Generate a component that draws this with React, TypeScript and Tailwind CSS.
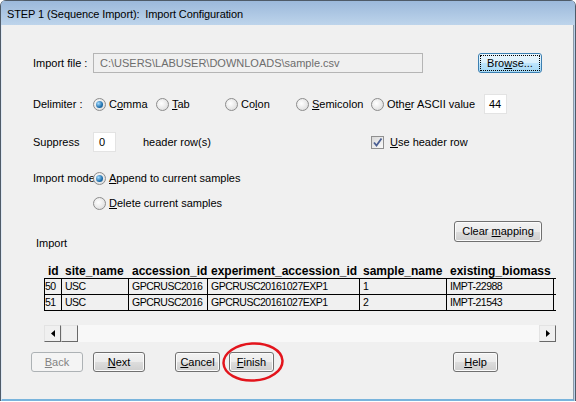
import React from 'react';
import clsx from 'clsx';

function Btn({ children, className, disabled, focused }: { children: React.ReactNode; className?: string; disabled?: boolean; focused?: boolean }) {
  return (
    <div
      className={clsx(
        'h-[20px] rounded-[3px] border flex items-center justify-center text-[11px] leading-none',
        disabled
          ? 'border-[#adb2b5] bg-[#f4f4f4] text-[#838383]'
          : focused
          ? 'border-[#3c7fb1] bg-[linear-gradient(#eaf6fd_0%,#d9f0fc_50%,#bee6fd_50%,#a7d9f5_100%)] outline outline-1 outline-dotted outline-black outline-offset-[-3px]'
          : 'border-[#707070] bg-[linear-gradient(#f2f2f2_0%,#ebebeb_50%,#dddddd_50%,#cfcfcf_100%)] shadow-[inset_0_0_0_1px_#fbfbfb]',
        className
      )}
    >
      {children}
    </div>
  );
}

function Radio({ checked }: { checked?: boolean }) {
  return (
    <span className="w-[13px] h-[13px] shrink-0 rounded-full border border-[#8c8c8c] bg-[radial-gradient(circle_at_40%_40%,#ffffff,#d6d6d6)] flex items-center justify-center">
      {checked && <span className="w-[7px] h-[7px] rounded-full bg-[radial-gradient(circle_at_35%_35%,#a6dcff,#1f70ad_60%,#0d4a80)]" />}
    </span>
  );
}

function ScrollBtn({ dir }: { dir?: 'left' | 'right' }) {
  return (
    <div className="w-[17px] h-[17px] shrink-0 border border-t-[#e3e3e3] border-l-[#e3e3e3] border-r-[#696969] border-b-[#696969] bg-[#f0f0f0] flex items-center justify-center">
      {dir === 'left' && (
        <svg width="4" height="7" viewBox="0 0 4 7"><polygon points="4,0 4,7 0,3.5" fill="#000" /></svg>
      )}
      {dir === 'right' && (
        <svg width="4" height="7" viewBox="0 0 4 7"><polygon points="0,0 0,7 4,3.5" fill="#000" /></svg>
      )}
    </div>
  );
}

const cols = [18, 67, 79, 152, 87, 107, 60];
const headers = ['id', 'site_name', 'accession_id', 'experiment_accession_id', 'sample_name', 'existing_biomass', ''];
const rows = [
  ['50', 'USC', 'GPCRUSC2016', 'GPCRUSC20161027EXP1', '1', 'IMPT-22988', ''],
  ['51', 'USC', 'GPCRUSC2016', 'GPCRUSC20161027EXP1', '2', 'IMPT-21543', ''],
];

export default function App() {
  return (
    <div className="w-[576px] h-[402px] bg-white font-['Liberation_Sans',Arial,sans-serif] text-black">
      <div className="h-[401px] flex flex-col border-l border-r border-[#4f5b68] rounded-t-[6px] overflow-hidden bg-[#b9d1ea]">
        {/* title bar */}
        <div className="h-[25px] shrink-0 border-t border-[#4f5b68] bg-[linear-gradient(#9cb9db,#bdd4eb)] pl-[6px] pt-[5px] text-[11px] tracking-[-0.1px] leading-[16px] whitespace-pre">
          STEP 1 (Sequence Import):  Import Configuration
        </div>

        <div className="flex-1 bg-[#f0f0f0] border-l border-[#dfe9f5] border-r border-r-[#8d9aa8] border-b-2 border-b-[#79b4dc] mr-[1px] text-[11px]">
          <div className="pl-[31px] w-[540px] flex flex-col">
            {/* import file */}
            <div className="mt-[28px] flex h-[20px] items-center">
              <span className="w-[60px]">Import file :</span>
              <div className="w-[330px] h-[20px] border border-[#b5b5b5] bg-[#f0f0f0] text-[#6d6d6d] pl-[6px] leading-[18px]">
                {'C:\\USERS\\LABUSER\\DOWNLOADS\\sample.csv'}
              </div>
              <Btn focused className="ml-[55px] w-[64px]">
                <span>Bro<u>w</u>se...</span>
              </Btn>
            </div>

            {/* delimiter */}
            <div className="mt-[21px] flex h-[20px] items-center">
              <span className="w-[60px]">Delimiter :</span>
              <span className="w-[63px] flex items-center gap-[3px]"><Radio checked /><span>C<u>o</u>mma</span></span>
              <span className="w-[69px] flex items-center gap-[3px]"><Radio /><span><u>T</u>ab</span></span>
              <span className="w-[71px] flex items-center gap-[3px]"><Radio /><span>Co<u>l</u>on</span></span>
              <span className="w-[75px] flex items-center gap-[3px]"><Radio /><span><u>S</u>emicolon</span></span>
              <span className="w-[113px] flex items-center gap-[3px]"><Radio /><span>Oth<u>e</u>r ASCII value</span></span>
              <div className="w-[23px] h-[20px] border border-[#e3e3e3] bg-white pl-[4px] leading-[18px]">44</div>
            </div>

            {/* suppress */}
            <div className="mt-[18px] flex h-[20px] items-center">
              <span className="w-[60px]">Suppress</span>
              <div className="w-[23px] h-[20px] border border-[#e3e3e3] bg-white pl-[5px] leading-[18px]">0</div>
              <span className="ml-[27px] w-[228px]">header row(s)</span>
              <span className="w-[13px] h-[13px] border border-[#8f8f8f] bg-[linear-gradient(135deg,#d8d8d8,#fbfbfb)] flex items-center justify-center">
                <svg width="11" height="11" viewBox="0 0 11 11">
                  <path d="M2 5.5 L4.5 8.5 L9.5 1.5" stroke="#4b5f93" strokeWidth="1.8" fill="none" />
                </svg>
              </span>
              <span className="ml-[6px]"><u>U</u>se header row</span>
            </div>

            {/* import mode */}
            <div className="mt-[18px] flex h-[16px] items-center">
              <span className="w-[60px] whitespace-nowrap">Import mode</span>
              <Radio checked />
              <span className="ml-[3px]"><u>A</u>ppend to current samples</span>
            </div>
            <div className="mt-[9px] flex h-[16px] items-center pl-[60px]">
              <Radio />
              <span className="ml-[3px]"><u>D</u>elete current samples</span>
            </div>

            {/* clear mapping */}
            <div className="mt-[10px] flex h-[29px] justify-between w-[509px]">
              <span className="self-end ml-[3px] leading-[14px]">Import</span>
              <Btn className="w-[88px] h-[21px]">
                <span>Clear <u>m</u>apping</span>
              </Btn>
            </div>

            {/* table */}
            <div className="mt-[14px] ml-[11px] w-[512px] overflow-hidden">
              <div className="flex h-[14px] w-max font-bold text-[12px] leading-[14px]">
                {headers.map((h, i) => (
                  <div key={i} style={{ width: cols[i] }} className={clsx('shrink-0 pl-[3px] border-r border-transparent whitespace-nowrap', i === 0 && 'border-l')}>
                    {h}
                  </div>
                ))}
              </div>
              <div className="border-t border-black w-max">
                {rows.map((r, ri) => (
                  <div key={ri} className="flex h-[16px] border-b border-black text-[10.5px] tracking-[-0.5px] leading-[15px]">
                    {r.map((c, i) => (
                      <div
                        key={i}
                        style={{ width: cols[i] }}
                        className={clsx('shrink-0 border-r border-black whitespace-nowrap overflow-hidden', i === 0 ? 'border-l pl-0' : 'pl-[3px]')}
                      >
                        {c}
                      </div>
                    ))}
                  </div>
                ))}
              </div>
            </div>

            {/* scrollbar */}
            <div className="mt-[14px] ml-[11px] w-[512px] h-[17px] flex">
              <ScrollBtn dir="left" />
              <ScrollBtn />
              <div className="flex-1 bg-[#f8f8f8]" />
              <ScrollBtn dir="right" />
            </div>

            {/* buttons */}
            <div className="mt-[10px] ml-[-2px] flex h-[20px]">
              <Btn disabled className="w-[52px]"><span><u>B</u>ack</span></Btn>
              <Btn className="ml-[10px] w-[52px]"><span><u>N</u>ext</span></Btn>
              <Btn className="ml-[30px] w-[45px]"><span><u>C</u>ancel</span></Btn>
              <div className="relative ml-[9px]">
                <Btn className="w-[45px]"><span><u>F</u>inish</span></Btn>
                <svg className="absolute left-[-7px] top-[-10px]" width="62" height="40" viewBox="0 0 62 40">
                  <ellipse cx="31" cy="20" rx="29.5" ry="18.5" stroke="#e3141c" strokeWidth="2.5" fill="none" transform="rotate(-3 31 20)" />
                </svg>
              </div>
              <Btn className="ml-[179px] w-[45px]"><span><u>H</u>elp</span></Btn>
            </div>
          </div>
        </div>
      </div>
    </div>
  );
}
